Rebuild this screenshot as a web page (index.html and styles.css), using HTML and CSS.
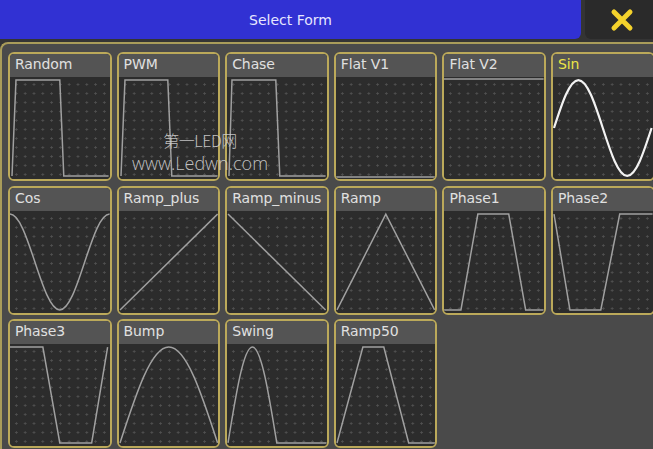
FILE: index.html
```html
<!DOCTYPE html>
<html lang="en">
<head>
    <meta charset="UTF-8">
    <title>Select Form</title>
    <link rel="stylesheet" href="styles.css">
</head>
<body>
    <div class="screen">
        <!-- Title bar -->
        <div class="topbar">
            <div class="title">Select Form</div>
            <div class="close">
                <svg width="26" height="24" viewBox="0 0 26 24">
                    <path d="M5 4 L21 20 M21 4 L5 20" stroke="#f4d22c" stroke-width="5" stroke-linecap="round" fill="none"/>
                </svg>
            </div>
        </div>

        <!-- Form grid -->
        <div class="panel">
            <div class="grid">
                <div class="form">
                    <div class="label">Random</div>
                    <div class="graph"><svg viewBox="0 0 100 100" preserveAspectRatio="none"><path d="M2 97 L6 3 H50 L54 97 H99"/></svg></div>
                </div>
                <div class="form">
                    <div class="label">PWM</div>
                    <div class="graph"><svg viewBox="0 0 100 100" preserveAspectRatio="none"><path d="M2 97 L6 3 H49 L53 97 H99"/></svg></div>
                </div>
                <div class="form">
                    <div class="label">Chase</div>
                    <div class="graph"><svg viewBox="0 0 100 100" preserveAspectRatio="none"><path d="M2 97 L5 3 H49 L53 97 H99"/></svg></div>
                </div>
                <div class="form">
                    <div class="label">Flat V1</div>
                    <div class="graph"><svg viewBox="0 0 100 100" preserveAspectRatio="none"><path d="M0 98 H100"/></svg></div>
                </div>
                <div class="form">
                    <div class="label">Flat V2</div>
                    <div class="graph"><svg viewBox="0 0 100 100" preserveAspectRatio="none"><path d="M0 2 H100"/></svg></div>
                </div>
                <div class="form selected">
                    <div class="label">Sin</div>
                    <div class="graph"><svg viewBox="0 0 100 100" preserveAspectRatio="none"><path d="M1 50 C8.99 25.92 16.63 3 25.5 3 S42.01 25.92 50 50 S65.63 97 74.5 97 S91.01 74.08 99 50"/></svg></div>
                </div>

                <div class="form">
                    <div class="label">Cos</div>
                    <div class="graph"><svg viewBox="0 0 100 100" preserveAspectRatio="none"><path d="M0 3 C9.05 3 16.85 25.92 25 50 S40.95 97 50 97 S66.85 74.08 75 50 S90.95 3 100 3"/></svg></div>
                </div>
                <div class="form">
                    <div class="label">Ramp_plus</div>
                    <div class="graph"><svg viewBox="0 0 100 100" preserveAspectRatio="none"><path d="M1 97 L99 3"/></svg></div>
                </div>
                <div class="form">
                    <div class="label">Ramp_minus</div>
                    <div class="graph"><svg viewBox="0 0 100 100" preserveAspectRatio="none"><path d="M1 3 L99 97"/></svg></div>
                </div>
                <div class="form">
                    <div class="label">Ramp</div>
                    <div class="graph"><svg viewBox="0 0 100 100" preserveAspectRatio="none"><path d="M1 97 L50 3 L99 97"/></svg></div>
                </div>
                <div class="form">
                    <div class="label">Phase1</div>
                    <div class="graph"><svg viewBox="0 0 100 100" preserveAspectRatio="none"><path d="M0 97 H17 L34 3 H65 L82 97 H100"/></svg></div>
                </div>
                <div class="form">
                    <div class="label">Phase2</div>
                    <div class="graph"><svg viewBox="0 0 100 100" preserveAspectRatio="none"><path d="M1 3 L17 97 H48 L67 3 H100"/></svg></div>
                </div>

                <div class="form">
                    <div class="label">Phase3</div>
                    <div class="graph"><svg viewBox="0 0 100 100" preserveAspectRatio="none"><path d="M0 3 H33 L50 97 H82 L98 3"/></svg></div>
                </div>
                <div class="form">
                    <div class="label">Bump</div>
                    <div class="graph"><svg viewBox="0 0 100 100" preserveAspectRatio="none"><path d="M1 97 C16.98 48.84 32.26 3 50 3 S83.02 48.84 99 97"/></svg></div>
                </div>
                <div class="form">
                    <div class="label">Swing</div>
                    <div class="graph"><svg viewBox="0 0 100 100" preserveAspectRatio="none"><path d="M1 97 C9 48.84 16.63 3 25.5 3 S42 48.84 50 97 H100"/></svg></div>
                </div>
                <div class="form">
                    <div class="label">Ramp50</div>
                    <div class="graph"><svg viewBox="0 0 100 100" preserveAspectRatio="none"><path d="M1 97 L27 3 H48 L73 97 H100"/></svg></div>
                </div>
            </div>
        </div>

        <!-- Site watermark baked into the screenshot -->
        <div class="watermark">
            <div class="wm-cn">第一LED网</div>
            <div class="wm-url">www.Ledwn.com</div>
        </div>
    </div>
</body>
</html>
```

FILE: styles.css
```css
body {
    margin: 0;
    background-color: #333;
    font-family: "DejaVu Sans", Verdana, sans-serif;
}

.screen {
    position: relative;
    width: 653px;
    height: 449px;
    overflow: hidden;
    background-color: #343434;
}

/* Title bar */
.topbar {
    display: flex;
    gap: 4px;
    height: 39px;
}

.title {
    flex: 1;
    background-color: #3131d3;
    border-bottom-right-radius: 6px;
    color: #e6e6ff;
    font-size: 14px;
    line-height: 40px;
    text-align: center;
}

.close {
    width: 68px;
    background-color: #2a2a2a;
    border-radius: 0 0 0 6px;
    display: flex;
    align-items: center;
    justify-content: center;
    padding-left: 6px;
    box-sizing: border-box;
}

.close svg {
    display: block;
}

/* Panel holding the forms */
.panel {
    margin-top: 3px;
    height: 420px;
    background-color: #4a4a4a;
    border-top: 2px solid #a99c5a;
    border-left: 2px solid #a99c5a;
    border-top-left-radius: 8px;
    padding: 8px 0 0 6px;
    box-sizing: border-box;
}

.grid {
    display: grid;
    grid-template-columns: repeat(6, 103.6px);
    grid-auto-rows: 129px;
    column-gap: 5px;
    row-gap: 4.5px;
}

.form {
    display: flex;
    flex-direction: column;
    border: 2px solid #bba95a;
    border-radius: 6px;
    background-color: #2c2c2c;
    overflow: hidden;
}

.label {
    height: 23px;
    flex: none;
    background-color: #545454;
    color: #e0e0e0;
    font-size: 14px;
    line-height: 21px;
    padding-left: 5px;
    white-space: nowrap;
    letter-spacing: -0.1px;
}

.selected .label {
    color: #ece446;
}

.graph {
    flex: 1;
    background-color: #2c2c2c;
    background-image: radial-gradient(circle, #505050 0.9px, transparent 1.4px);
    background-size: 8.8px 9px;
    background-position: 2px 3px;
}

.graph svg {
    display: block;
    width: 100%;
    height: 100%;
}

.graph path {
    fill: none;
    stroke: #a0a0a0;
    stroke-width: 1.5px;
    vector-effect: non-scaling-stroke;
}

.selected .graph path {
    stroke: #f2f2f2;
    stroke-width: 2.2px;
}

/* Watermark */
.watermark {
    position: absolute;
    left: 124px;
    top: 129px;
    width: 152px;
    text-align: center;
    color: rgba(210, 210, 210, 0.9);
    font-family: "Open Sans", "Noto Sans CJK SC", sans-serif;
}

.wm-cn {
    font-size: 16px;
    line-height: 22px;
    font-family: "Noto Sans CJK SC", sans-serif;
    font-weight: 300;
    letter-spacing: -0.5px;
}

.wm-url {
    margin-top: 3px;
    font-size: 18px;
    line-height: 18px;
    font-weight: 300;
}
```
